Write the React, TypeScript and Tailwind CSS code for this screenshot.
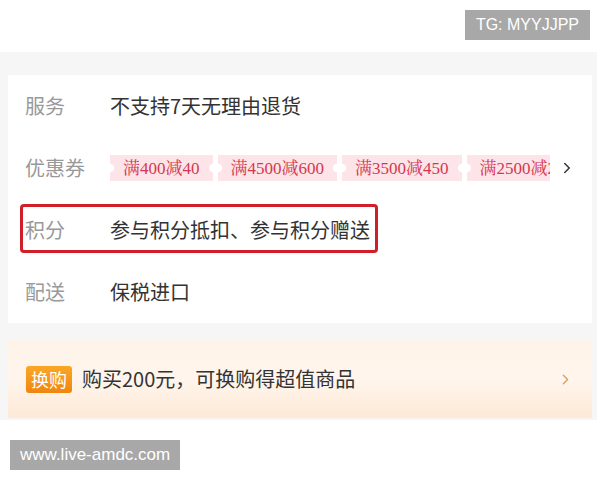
import { ChevronRight } from "lucide-react";

const coupons = ["满400减40", "满4500减600", "满3500减450", "满2500减200"];

const Coupon = ({ text }: { text: string }) => {
  return (
    <div className="relative shrink-0 h-[26px] flex items-center bg-[#fde4e8] px-[13px]">
      <span className="absolute -left-[4px] top-[9px] w-[8px] h-[8px] rounded-full bg-white" />
      <span className="absolute -right-[4px] top-[9px] w-[8px] h-[8px] rounded-full bg-white" />
      <span className="text-[17px] leading-none text-[#d4384f] font-['Liberation_Serif','Noto_Serif_CJK_SC','Noto_Sans_CJK_SC',serif] whitespace-nowrap">
        {text}
      </span>
    </div>
  );
};

const Row = ({
  label,
  children,
}: {
  label: string;
  children: React.ReactNode;
}) => {
  return (
    <div className="relative h-[62px] flex items-center pl-[17px]">
      <div className="w-[85px] shrink-0 text-[20px] text-[#999999]">{label}</div>
      {children}
    </div>
  );
};

export default function App() {
  return (
    <div className="w-[600px] h-[480px] bg-white overflow-hidden font-['Noto_Sans_CJK_SC',sans-serif]">
      <div className="h-[52px] flex justify-end pt-[10px] pr-[10px]">
        <div className="h-[30px] px-[11px] bg-[#a8a8a8] text-white text-[16px] flex items-center font-['Liberation_Sans',sans-serif]">
          TG: MYYJJPP
        </div>
      </div>

      <div className="w-[597px] bg-[#f6f6f6] pl-[8px] pr-[5px] pt-[23px] pb-[2px]">
        <div className="bg-white">
          <Row label="服务">
            <span className="text-[20px] text-[#333333]">不支持7天无理由退货</span>
          </Row>
          <Row label="优惠券">
            <div className="w-[440px] overflow-hidden flex gap-[5px]">
              {coupons.map((c) => (
                <Coupon key={c} text={c} />
              ))}
            </div>
            <ChevronRight size={18} strokeWidth={2} className="ml-[8px] text-[#333333]" />
          </Row>
          <Row label="积分">
            <span className="text-[20px] text-[#333333]">参与积分抵扣、参与积分赠送</span>
            <div className="absolute left-[12px] top-[5px] w-[358px] h-[49px] border-[3px] border-[#d01f28] rounded-[4px]" />
          </Row>
          <Row label="配送">
            <span className="text-[20px] text-[#333333]">保税进口</span>
          </Row>
        </div>

        <div className="mt-[17px] h-[78px] flex items-center pl-[18px] pr-[18px] bg-gradient-to-b from-[#fdf3e8] via-[#fff5ec] to-[#fde9d6]">
          <div className="h-[27px] w-[46px] rounded-[3px] bg-gradient-to-b from-[#f9a825] to-[#f08510] text-white text-[18px] flex items-center justify-center">
            换购
          </div>
          <span className="ml-[10px] text-[20px] text-[#333333]">购买200元，可换购得超值商品</span>
          <ChevronRight size={17} strokeWidth={2} className="ml-auto text-[#d9a06a]" />
        </div>
      </div>

      <div className="pt-[20px] pl-[10px]">
        <div className="inline-flex h-[30px] px-[10px] items-center bg-[#a8a8a8] text-white text-[17px] font-['Liberation_Sans',sans-serif]">
          www.live-amdc.com
        </div>
      </div>
    </div>
  );
}
